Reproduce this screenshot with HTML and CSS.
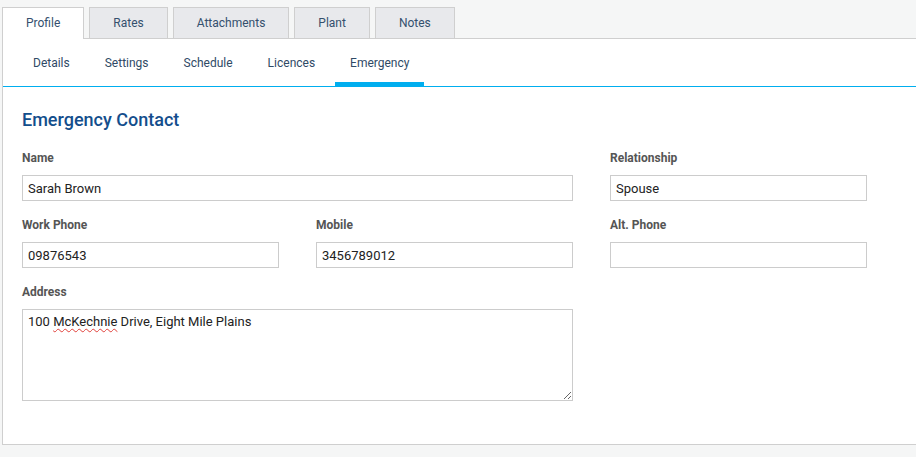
FILE: index.html
```html
<!DOCTYPE html>
<html lang="en">
<head>
<meta charset="utf-8">
<title>Emergency Contact</title>
<link rel="stylesheet" href="styles.css">
</head>
<body>
<div class="page">
  <nav class="tabs">
    <div class="tab active">Profile</div>
    <div class="tab">Rates</div>
    <div class="tab">Attachments</div>
    <div class="tab">Plant</div>
    <div class="tab">Notes</div>
  </nav>
  <section class="panel">
    <nav class="subtabs">
      <div class="subtab">Details</div>
      <div class="subtab">Settings</div>
      <div class="subtab">Schedule</div>
      <div class="subtab">Licences</div>
      <div class="subtab active">Emergency</div>
    </nav>
    <div class="content">
      <h2 class="heading">Emergency Contact</h2>
      <div class="form">
        <div class="field span2">
          <label class="label">Name</label>
          <input class="input" type="text" value="Sarah Brown" spellcheck="false">
        </div>
        <div class="field">
          <label class="label">Relationship</label>
          <input class="input" type="text" value="Spouse" spellcheck="false">
        </div>
        <div class="field">
          <label class="label">Work Phone</label>
          <input class="input" type="text" value="09876543" spellcheck="false">
        </div>
        <div class="field">
          <label class="label">Mobile</label>
          <input class="input" type="text" value="3456789012" spellcheck="false">
        </div>
        <div class="field">
          <label class="label">Alt. Phone</label>
          <input class="input" type="text" value="" spellcheck="false">
        </div>
        <div class="field span2">
          <label class="label">Address</label>
          <div class="area-wrap">
            <textarea class="area" spellcheck="false">100 McKechnie Drive, Eight Mile Plains</textarea>
            <span class="squiggle">100 <span class="miss">McKechnie</span></span>
          </div>
        </div>
      </div>
    </div>
  </section>
</div>
</body>
</html>
```

FILE: styles.css
```css
* { box-sizing: border-box; }

html, body {
  margin: 0;
  padding: 0;
  background: #f5f6f6;
  font-family: Roboto, "Liberation Sans", Arial, sans-serif;
  overflow: hidden;
}

.page {
  width: 960px;
  padding-top: 7px;
  padding-left: 2px;
}

.tabs {
  display: flex;
  gap: 5px;
  height: 31px;
}

.tab {
  position: relative;
  height: 31px;
  padding: 0 23px;
  border: 1px solid #cfcfcf;
  border-bottom: none;
  background: #e8e9ec;
  color: #34506e;
  font-size: 12px;
  line-height: 31px;
  text-align: center;
}

.tab.active {
  background: #fff;
  height: 32px;
  z-index: 2;
}

.panel {
  background: #fff;
  border: 1px solid #cfcfcf;
  border-right: none;
  height: 407px;
}

.subtabs {
  display: flex;
  gap: 5px;
  padding-left: 15px;
  height: 48px;
  border-bottom: 1px solid #00aeef;
}

.subtab {
  padding: 2px 15px 0;
  height: 47px;
  line-height: 45px;
  color: #2f4a66;
  font-size: 12px;
}

.subtab.active {
  box-shadow: inset 0 -4px 0 #00aeef;
}

.content {
  padding: 22px 19px 0;
}

.heading {
  margin: 0 0 19px;
  font-size: 18px;
  line-height: 22px;
  font-weight: 500;
  color: #134e8c;
}

.form {
  display: grid;
  grid-template-columns: 257px 257px 257px;
  column-gap: 37px;
  row-gap: 16px;
}

.field {
  display: flex;
  flex-direction: column;
  gap: 9px;
}

.span2 { grid-column: span 2; }

.label {
  font-size: 12px;
  line-height: 16px;
  font-weight: 700;
  color: #555;
}

.input {
  height: 26px;
  border: 1px solid #cccccc;
  padding: 0 5px;
  font-family: Roboto, "Liberation Sans", Arial, sans-serif;
  font-size: 13px;
  color: #222;
  background: #fff;
  outline: none;
}

.area-wrap {
  position: relative;
}

.area {
  display: block;
  width: 100%;
  height: 92px;
  border: 1px solid #cccccc;
  padding: 4px 5px;
  font-family: Roboto, "Liberation Sans", Arial, sans-serif;
  font-size: 13px;
  color: #222;
  background: #fff;
  outline: none;
  resize: vertical;
}

.squiggle {
  position: absolute;
  left: 6px;
  top: 5px;
  font-size: 13px;
  color: transparent;
  pointer-events: none;
  white-space: pre;
}

.miss {
  text-decoration: underline wavy #e0403a;
  text-decoration-thickness: 1px;
  text-underline-offset: 2px;
}
```
